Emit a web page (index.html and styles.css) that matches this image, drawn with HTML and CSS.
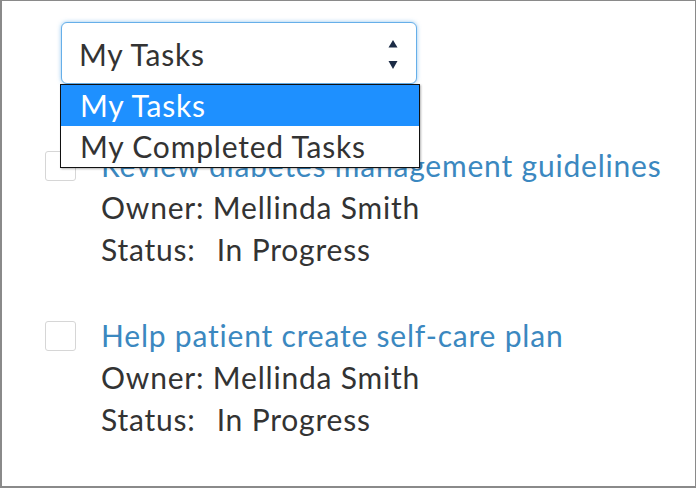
FILE: index.html
```html
<!DOCTYPE html>
<html lang="en">
<head>
<meta charset="utf-8">
<link rel="stylesheet" href="styles.css">
</head>
<body>
<div class="frame">
  <div class="select-wrap">
    <div class="select">
      <span class="select-value">My Tasks</span>
      <svg class="arrows" width="10" height="30" viewBox="0 0 10 30">
        <polygon points="5,0 9.5,7.5 0.5,7.5" fill="#1b2b45"/>
        <polygon points="0.5,21 9.5,21 5,29" fill="#1b2b45"/>
      </svg>
    </div>
    <ul class="dropdown">
      <li class="option selected">My Tasks</li>
      <li class="option">My Completed Tasks</li>
    </ul>
  </div>
  <ul class="tasks">
    <li class="task">
      <span class="checkbox"></span>
      <div class="task-body">
        <a class="task-title" href="#">Review diabetes management guidelines</a>
        <div class="task-line">Owner: Mellinda Smith</div>
        <div class="task-line"><span class="label">Status:</span><span class="value">In Progress</span></div>
      </div>
    </li>
    <li class="task">
      <span class="checkbox"></span>
      <div class="task-body">
        <a class="task-title" href="#">Help patient create self-care plan</a>
        <div class="task-line">Owner: Mellinda Smith</div>
        <div class="task-line"><span class="label">Status:</span><span class="value">In Progress</span></div>
      </div>
    </li>
  </ul>
</div>
</body>
</html>
```

FILE: styles.css
```css
html, body {
  margin: 0;
  padding: 0;
  background: #fff;
}
.frame {
  box-sizing: border-box;
  width: 696px;
  height: 488px;
  border: 1px solid #8a8a8a;
  border-left-width: 2px;
  border-bottom-width: 2px;
  font-family: Lato, "Open Sans", sans-serif;
  font-size: 30px;
  letter-spacing: 0.8px;
  color: #333;
  padding: 21px 0 0 0;
}
.select-wrap {
  position: relative;
  margin-left: 59px;
  width: 356px;
}
.select {
  box-sizing: border-box;
  height: 62px;
  border: 1px solid #66afe9;
  border-radius: 6px;
  box-shadow: 0 0 4px rgba(102, 175, 233, 0.7);
  display: flex;
  align-items: center;
  justify-content: space-between;
  padding: 2px 18px 0 17px;
  background: #fff;
}
.select-value {
  line-height: 1;
}
.arrows {
  display: block;
  margin-top: 2px;
}
.dropdown {
  position: absolute;
  left: -1px;
  top: 62px;
  width: 360px;
  box-sizing: border-box;
  margin: 0;
  padding: 0;
  list-style: none;
  border: 1px solid #111;
  background: #fff;
  box-shadow: 1px 1px 2px rgba(0, 0, 0, 0.3);
  z-index: 5;
}
.option {
  height: 41px;
  line-height: 41px;
  padding-left: 19px;
  color: #333;
}
.option.selected {
  background: #1e90ff;
  color: #fff;
}
.tasks {
  list-style: none;
  margin: 60px 0 0 0;
  padding: 0 0 0 43px;
  display: flex;
  flex-direction: column;
  gap: 44px;
}
.task {
  display: flex;
  gap: 25px;
  align-items: flex-start;
}
.checkbox {
  box-sizing: border-box;
  flex: none;
  width: 31px;
  height: 30px;
  margin-top: 7px;
  border: 1.5px solid #d6d6d6;
  border-radius: 3px;
  background: #fff;
}
.task-body {
  display: flex;
  flex-direction: column;
  line-height: 42px;
}
.task-title {
  color: #3b88c0;
  text-decoration: none;
}
.task-line {
  color: #333;
}
.value {
  margin-left: 21px;
}
```
